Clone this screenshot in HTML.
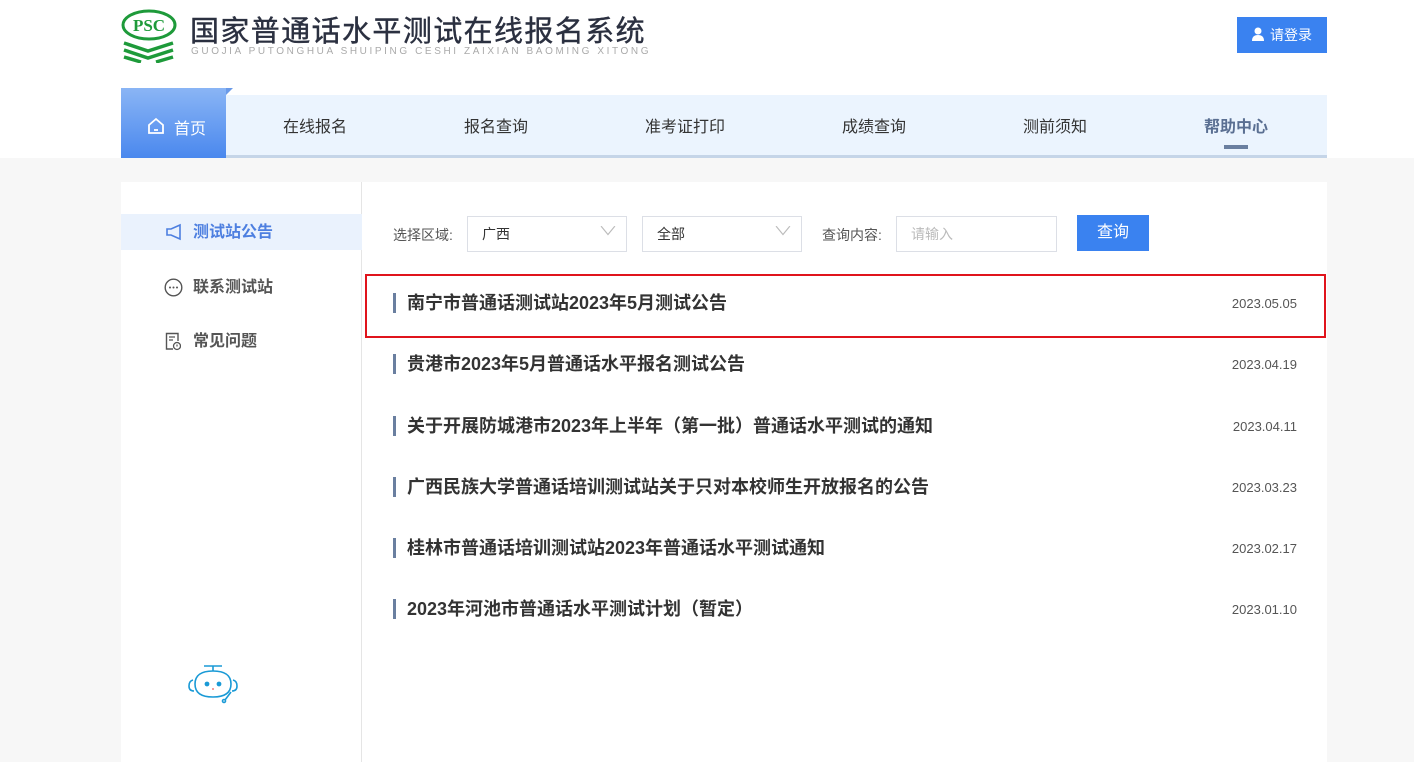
<!DOCTYPE html>
<html><head><meta charset="utf-8"><style>
*{margin:0;padding:0;box-sizing:border-box}
body{width:1414px;height:754px;overflow:hidden;background:#f7f7f7;font-family:"Liberation Sans","Noto Sans CJK SC",sans-serif;position:relative}
.top{position:absolute;left:0;top:0;width:1414px;height:158px;background:#fff}
.abs{position:absolute}
.nav{position:absolute;left:121px;top:95px;width:1206px;height:63px;background:#ebf4fe;border-bottom:3px solid #c5d5e8}
.nav span{position:absolute;top:18px;font-size:16px;color:#333}
.home{position:absolute;left:121px;top:88px;width:105px;height:70px;background:linear-gradient(#8ab5f5,#4a88ee);color:#fff;font-size:16px}
.panel{position:absolute;left:121px;top:182px;width:1206px;height:580px;background:#fff}
.side{position:absolute;left:0;top:0;width:241px;height:580px;border-right:1px solid #e5e5e5}
.si{position:absolute;left:0;width:241px;height:36px;font-size:16px;font-weight:bold;color:#555;line-height:38px;padding-left:72px}
.sel{position:absolute;top:34px;height:36px;border:1px solid #dcdfe6;font-size:14px;color:#333;line-height:34px;padding-left:14px}
.item{position:absolute;left:272px;width:904px;font-size:18px;font-weight:bold;color:#333;padding-left:11px;border-left:3px solid #6a7fa0;line-height:20px;height:20px}
.date{position:absolute;right:0;top:1px;font-size:13px;font-weight:normal;color:#555}
</style></head><body>
<div class="top"></div>
<svg class="abs" style="left:121px;top:9px" width="56" height="54" viewBox="0 0 56 54">
<ellipse cx="28" cy="16" rx="26" ry="14" fill="none" stroke="#1e9a3a" stroke-width="3"/>
<text x="28" y="22" text-anchor="middle" font-family="Liberation Serif" font-weight="bold" font-size="17" fill="#1e9a3a">PSC</text>
<g stroke="#1e9a3a" stroke-width="3.5" fill="none"><path d="M3 34 L27 42 L52 34"/><path d="M3 41 L27 49 L52 41"/><path d="M3 48 L20 53 M35 53 L52 48"/></g>
</svg>
<div class="abs" style="left:190px;top:8px;font-size:29px;letter-spacing:1.4px;color:#2b3040;white-space:nowrap;-webkit-text-stroke:0.4px #2b3040">国家普通话水平测试在线报名系统</div>
<div class="abs" style="left:191px;top:46px;font-size:10px;letter-spacing:2.6px;color:#aaa;white-space:nowrap">GUOJIA PUTONGHUA SHUIPING CESHI ZAIXIAN BAOMING XITONG</div>
<div class="abs" style="left:1237px;top:17px;width:90px;height:36px;background:#3a82f0;color:#fff;font-size:14px;line-height:36px;padding-left:33px">请登录</div>
<svg class="abs" style="left:1251px;top:27px" width="14" height="15" viewBox="0 0 14 15"><circle cx="7" cy="4" r="3.5" fill="#fff"/><path d="M1 14 Q1 8 7 8 Q13 8 13 14Z" fill="#fff"/></svg>
<div class="nav">
<span style="left:162px">在线报名</span><span style="left:343px">报名查询</span><span style="left:524px">准考证打印</span><span style="left:721px">成绩查询</span><span style="left:902px">测前须知</span><span style="left:1083px;color:#5a6f92;font-weight:bold">帮助中心</span>
<div class="abs" style="left:1103px;top:50px;width:24px;height:4px;background:#6a7fa0"></div>
</div>
<div class="home"><svg class="abs" style="left:26px;top:29px" width="18" height="18" viewBox="0 0 18 18"><path d="M2 8 L9 2 L16 8 V16 H2Z" fill="none" stroke="#fff" stroke-width="1.8"/><path d="M7 13 H11" stroke="#fff" stroke-width="1.8"/></svg><span class="abs" style="left:53px;top:27px">首页</span></div>
<div class="abs" style="left:226px;top:88px;width:0;height:0;border-left:7px solid #6a9ae8;border-bottom:7px solid transparent"></div>
<div class="panel">
<div class="side">
<div class="si" style="top:32px;background:#eaf2fd;color:#4d7fe0">测试站公告</div>
<svg class="abs" style="left:44px;top:41px" width="18" height="18" viewBox="0 0 18 18"><path d="M2 6 H6 L15 2 V16 L6 12 H2Z" fill="none" stroke="#4d7fe0" stroke-width="1.6"/></svg>
<div class="si" style="top:87px">联系测试站</div>
<svg class="abs" style="left:43px;top:96px" width="19" height="19" viewBox="0 0 19 19"><circle cx="9.5" cy="9.5" r="8.3" fill="none" stroke="#555" stroke-width="1.4"/><circle cx="6" cy="9.5" r="1" fill="#555"/><circle cx="9.5" cy="9.5" r="1" fill="#555"/><circle cx="13" cy="9.5" r="1" fill="#555"/></svg>
<div class="si" style="top:141px">常见问题</div>
<svg class="abs" style="left:44px;top:150px" width="16" height="19" viewBox="0 0 16 19"><path d="M8 17 H1.5 V1.5 H13 V9" fill="none" stroke="#555" stroke-width="1.4"/><path d="M4 5 H10 M4 8 H8" stroke="#555" stroke-width="1.3"/><circle cx="12" cy="14" r="3.5" fill="none" stroke="#555" stroke-width="1.3"/><path d="M12 12.5 V14.5" stroke="#555" stroke-width="1.2"/></svg>
<svg class="abs" style="left:64px;top:480px" width="54" height="44" viewBox="0 0 54 44"><g fill="none" stroke="#1a9ad6" stroke-width="1.6"><path d="M19 4 H37 M28 4 V9"/><path d="M10 22 Q10 9 28 9 Q46 9 46 22 Q46 35 28 35 Q10 35 10 22Z"/><path d="M8 18 Q4 19 4 24 Q4 29 9 29"/><path d="M48 18 Q52 19 52 24 Q52 29 47 29 M46 30 L40 38"/><circle cx="39" cy="39" r="1.5"/></g><circle cx="22" cy="22" r="2.4" fill="#1a9ad6"/><circle cx="34" cy="22" r="2.4" fill="#1a9ad6"/><circle cx="28" cy="27" r="0.9" fill="#e55"/></svg>
</div>
<div class="abs" style="left:272px;top:43px;font-size:14px;color:#555">选择区域:</div>
<div class="sel" style="left:346px;width:160px">广西<span class="abs" style="right:12px;top:-3px;color:#bbb;font-size:12px;transform:scaleX(1.6)">∨</span></div>
<div class="sel" style="left:521px;width:160px">全部<span class="abs" style="right:12px;top:-3px;color:#bbb;font-size:12px;transform:scaleX(1.6)">∨</span></div>
<div class="abs" style="left:701px;top:43px;font-size:14px;color:#555">查询内容:</div>
<div class="sel" style="left:775px;width:161px;color:#bbb">请输入</div>
<div class="abs" style="left:956px;top:33px;width:72px;height:36px;background:#3a82f0;color:#fff;font-size:16px;line-height:36px;text-align:center">查询</div>
<div class="abs" style="left:244px;top:92px;width:961px;height:64px;border:2px solid #e0141c"></div>
<div class="item" style="top:111px">南宁市普通话测试站2023年5月测试公告<span class="date">2023.05.05</span></div>
<div class="item" style="top:172px">贵港市2023年5月普通话水平报名测试公告<span class="date">2023.04.19</span></div>
<div class="item" style="top:234px">关于开展防城港市2023年上半年（第一批）普通话水平测试的通知<span class="date">2023.04.11</span></div>
<div class="item" style="top:295px">广西民族大学普通话培训测试站关于只对本校师生开放报名的公告<span class="date">2023.03.23</span></div>
<div class="item" style="top:356px">桂林市普通话培训测试站2023年普通话水平测试通知<span class="date">2023.02.17</span></div>
<div class="item" style="top:417px">2023年河池市普通话水平测试计划（暂定）<span class="date">2023.01.10</span></div>
</div>
</body></html>
